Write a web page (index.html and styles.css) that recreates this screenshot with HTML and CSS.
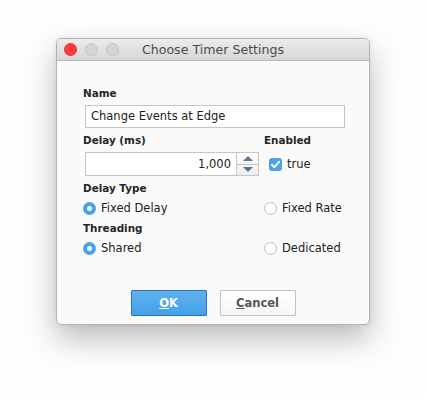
FILE: index.html
```html
<!DOCTYPE html>
<html lang="en">
<head>
    <meta charset="UTF-8">
    <meta name="viewport" content="width=device-width, initial-scale=1.0">
    <title>Choose Timer Settings</title>
    <link rel="stylesheet" href="styles.css">
</head>
<body>
<div class="window">
    <!-- Title bar -->
    <div class="titlebar">
        <div class="lights">
            <span class="light red"></span>
            <span class="light"></span>
            <span class="light"></span>
        </div>
        <span class="title">Choose Timer Settings</span>
    </div>

    <div class="content">
        <div class="label">Name</div>
        <div class="field">Change Events at Edge</div>

        <div class="grid">
            <div class="label">Delay (ms)</div>
            <div class="label">Enabled</div>

            <div class="spinner">
                <div class="spin-value">1,000</div>
                <div class="spin-arrows">
                    <span class="arrow up"></span>
                    <span class="arrow down"></span>
                </div>
            </div>
            <div class="check-row">
                <span class="checkbox">
                    <svg width="13" height="13" viewBox="0 0 13 13"><path d="M3 6.8 L5.4 9.2 L10 3.8" fill="none" stroke="#fff" stroke-width="2" stroke-linecap="round" stroke-linejoin="round"/></svg>
                </span>
                <span>true</span>
            </div>

            <div class="label full">Delay Type</div>
            <div class="option"><span class="radio on"></span>Fixed Delay</div>
            <div class="option"><span class="radio"></span>Fixed Rate</div>

            <div class="label full">Threading</div>
            <div class="option"><span class="radio on"></span>Shared</div>
            <div class="option"><span class="radio"></span>Dedicated</div>
        </div>

        <div class="buttons">
            <button class="btn primary"><u>O</u>K</button>
            <button class="btn"><u>C</u>ancel</button>
        </div>
    </div>
</div>
</body>
</html>
```

FILE: styles.css
```css
html, body {
    min-height: 100vh;
}
body {
    margin: 0;
    background-color: #fdfdfd;
    font-family: "DejaVu Sans", sans-serif;
    font-size: 11.5px;
    color: #222;
    overflow: hidden;
}
.window {
    margin: 38px 0 0 56px;
    width: 314px;
    height: 287px;
    box-sizing: border-box;
    background-color: #fafafa;
    border: 1px solid #b4b4b4;
    border-radius: 5px;
    box-shadow: 0 14px 30px rgba(0, 0, 0, 0.26), 0 0 5px rgba(0, 0, 0, 0.07);
    overflow: hidden;
    display: flex;
    flex-direction: column;
}
.titlebar {
    height: 21px;
    flex: none;
    position: relative;
    display: flex;
    align-items: center;
    justify-content: center;
    background: linear-gradient(#ececec, #d6d6d6);
    border-bottom: 1px solid #b9b9b9;
}
.lights {
    position: absolute;
    left: 7px;
    top: 4px;
    display: flex;
    gap: 8px;
}
.light {
    width: 11px;
    height: 11px;
    border-radius: 50%;
    background-color: #d4d4d4;
    border: 0.5px solid #c2c2c2;
}
.light.red {
    background-color: #fc3b3b;
    border-color: #e3312f;
}
.title {
    font-size: 12.6px;
    color: #4b4b4b;
}
.content {
    flex: 1;
    display: flex;
    flex-direction: column;
    gap: 4px;
    padding: 24px 24px 0 26px;
}
.label {
    font-size: 10.4px;
    font-weight: bold;
    height: 16px;
    line-height: 16px;
    color: #262626;
    white-space: nowrap;
}
.field {
    height: 23px;
    box-sizing: border-box;
    margin-left: 2px;
    border: 1px solid #c6c6c6;
    background-color: #fff;
    padding: 0 5px;
    line-height: 21px;
}
.grid {
    display: grid;
    grid-template-columns: 181px 1fr;
    row-gap: 4px;
}
.full {
    grid-column: 1 / 3;
}
.spinner {
    margin-left: 2px;
    width: 174px;
    height: 24px;
    box-sizing: border-box;
    border: 1px solid #c6c6c6;
    background-color: #fff;
    display: flex;
}
.spin-value {
    flex: 1;
    text-align: right;
    padding-right: 5px;
    line-height: 22px;
}
.spin-arrows {
    width: 21px;
    border-left: 1px solid #c6c6c6;
    background: linear-gradient(#fdfdfd, #eeeeee);
    display: flex;
    flex-direction: column;
}
.arrow {
    flex: 1;
    display: flex;
    align-items: center;
    justify-content: center;
}
.arrow.up {
    border-bottom: 1px solid #c6c6c6;
}
.arrow::after {
    content: "";
    border-left: 5px solid transparent;
    border-right: 5px solid transparent;
}
.arrow.up::after {
    border-bottom: 5px solid #5a758c;
}
.arrow.down::after {
    border-top: 5px solid #5a758c;
}
.check-row {
    display: flex;
    align-items: center;
    gap: 5px;
    padding-left: 5px;
}
.checkbox {
    width: 13px;
    height: 13px;
    border-radius: 3px;
    background-color: #4aa2ea;
    display: flex;
}
.option {
    height: 16px;
    display: flex;
    align-items: center;
    gap: 5px;
    white-space: nowrap;
}
.radio {
    width: 13px;
    height: 13px;
    flex: none;
    box-sizing: border-box;
    border-radius: 50%;
    border: 1px solid #bdbdbd;
    background-color: #fff;
}
.radio.on {
    border: 4px solid #4aa2ea;
}
.buttons {
    margin-top: 30px;
    display: flex;
    justify-content: center;
    gap: 13px;
    padding-right: 2px;
}
.btn {
    width: 76px;
    height: 26px;
    font-family: "DejaVu Sans", sans-serif;
    font-size: 11.5px;
    font-weight: bold;
    color: #555;
    background: linear-gradient(#ffffff, #f4f6f8);
    border: 1px solid #c2c2c2;
    border-radius: 1px;
}
.btn.primary {
    color: #fff;
    background: linear-gradient(#5fb2f0, #44a0ea);
    border-color: #2e74b2;
}
```
